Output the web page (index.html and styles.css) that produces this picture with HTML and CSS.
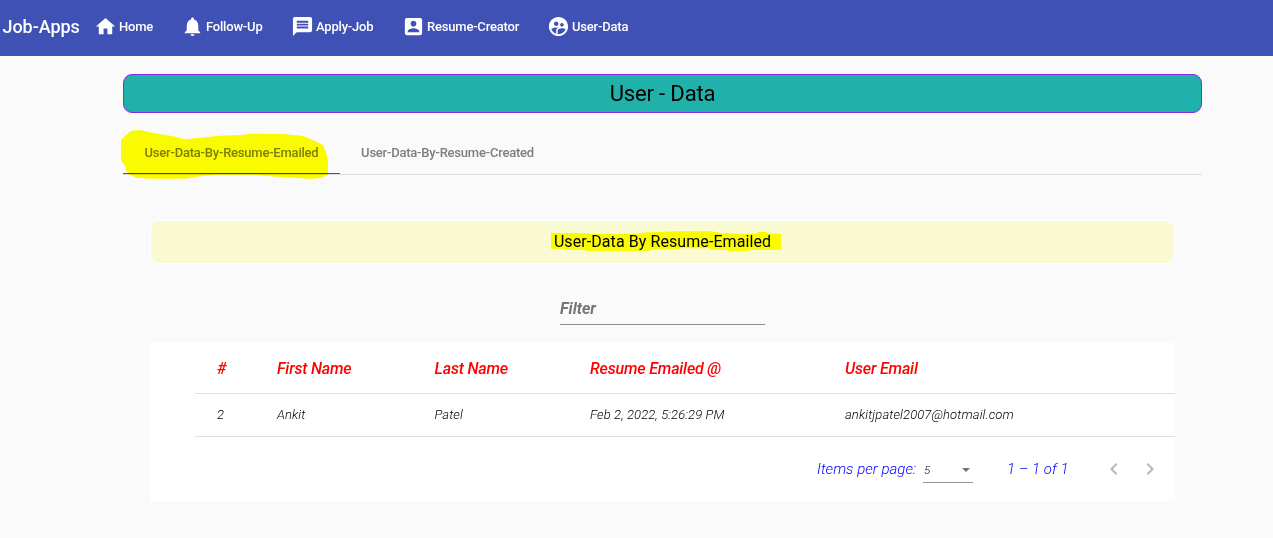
FILE: index.html
```html
<!DOCTYPE html>
<html lang="en">
<head>
<meta charset="utf-8">
<title>Job-Apps</title>
<link rel="stylesheet" href="styles.css">
</head>
<body>
<header class="toolbar">
  <span class="brand">Job-Apps</span>
  <nav class="nav">
    <a class="nav-link home"><svg viewBox="0 0 24 24"><path d="M10 20v-6h4v6h5v-8h3L12 3 2 12h3v8z"/></svg><span>Home</span></a>
    <a class="nav-link follow"><svg viewBox="0 0 24 24"><path d="M12 22c1.1 0 2-.9 2-2h-4c0 1.1.89 2 2 2zm6-6v-5c0-3.07-1.64-5.64-4.5-6.32V4c0-.83-.67-1.5-1.5-1.5s-1.5.67-1.5 1.5v.68C7.63 5.36 6 7.92 6 11v5l-2 2v1h16v-1l-2-2z"/></svg><span>Follow-Up</span></a>
    <a class="nav-link apply"><svg viewBox="0 0 24 24"><path d="M20 2H4c-1.1 0-1.99.9-1.99 2L2 22l4-4h14c1.1 0 2-.9 2-2V4c0-1.1-.9-2-2-2zm-2 12H6v-2h12v2zm0-3H6V9h12v2zm0-3H6V6h12v2z"/></svg><span>Apply-Job</span></a>
    <a class="nav-link resume"><svg viewBox="0 0 24 24"><path d="M3 5v14c0 1.1.89 2 2 2h14c1.1 0 2-.9 2-2V5c0-1.1-.9-2-2-2H5c-1.11 0-2 .9-2 2zm12 4c0 1.66-1.34 3-3 3s-3-1.34-3-3 1.34-3 3-3 3 1.34 3 3zm-9 8c0-2 4-3.1 6-3.1s6 1.1 6 3.1v1H6v-1z"/></svg><span>Resume-Creator</span></a>
    <a class="nav-link user"><svg viewBox="0 0 24 24"><path d="M11.99 2c-5.52 0-10 4.48-10 10s4.48 10 10 10 10-4.48 10-10-4.48-10-10-10zm3.61 6.34c1.07 0 1.93.86 1.93 1.93 0 1.07-.86 1.93-1.93 1.93-1.07 0-1.93-.86-1.93-1.93-.01-1.07.86-1.93 1.93-1.93zm-6-1.58c1.3 0 2.36 1.06 2.36 2.36 0 1.3-1.06 2.36-2.36 2.36s-2.36-1.06-2.36-2.36c0-1.31 1.05-2.36 2.36-2.36zm0 9.13v3.75c-2.4-.75-4.3-2.6-5.14-4.96 1.05-1.12 3.67-1.69 5.14-1.69.53 0 1.2.08 1.9.22-1.64.87-1.9 2.02-1.9 2.68zM11.99 20c-.27 0-.53-.01-.79-.04v-4.07c0-1.42 2.94-2.13 4.4-2.13 1.07 0 2.92.39 3.84 1.15-1.17 2.97-4.06 5.09-7.45 5.09z"/></svg><span>User-Data</span></a>
  </nav>
</header>
<main class="page">
  <h1 class="title"><span>User - Data</span></h1>
  <div class="tabs">
    <div class="tab active"><span>User-Data-By-Resume-Emailed</span>
      <svg class="marker marker-tab" viewBox="0 0 720 375"><path d="M33 225L50 208L65 197L90 195L130 204L190 214L225 223L270 218L330 212L390 210L425 206L520 207L580 213L610 226L640 241L648 262L654 285V330L630 339L600 342L560 339L480 334L430 329H320L270 334L228 341H120L80 338L60 330L48 318L46 305L33 285Z"/></svg>
    </div>
    <div class="tab second"><span>User-Data-By-Resume-Created</span></div>
  </div>
  <section class="content">
    <h2 class="banner"><span class="banner-text">User-Data By Resume-Emailed
      <svg class="marker marker-banner" viewBox="0 0 810 390"><path d="M63 69H178V72H310L350 67L385 66L440 64H545L568 68L620 71H680L685 66H710L712 70L753 72V120H665L648 123H595L590 120L540 119V115H450L445 118H365L360 122L315 123H168L165 120H110L105 117H63Z"/></svg></span></h2>
    <div class="filter"><span>Filter</span></div>
    <div class="card">
      <div class="table">
        <div class="row head"><span>#</span><span>First Name</span><span>Last Name</span><span>Resume Emailed @</span><span>User Email</span></div>
        <div class="row"><span>2</span><span>Ankit</span><span>Patel</span><span>Feb 2, 2022, 5:26:29 PM</span><span>ankitjpatel2007@hotmail.com</span></div>
      </div>
      <div class="paginator">
        <span class="per-page">Items per page:</span>
        <span class="select"><span>5</span><i class="caret"></i></span>
        <span class="range">1 – 1 of 1</span>
        <svg class="chevron prev" viewBox="0 0 24 24"><path d="M15.41 7.41L14 6l-6 6 6 6 1.41-1.41L10.83 12z"/></svg>
        <svg class="chevron" viewBox="0 0 24 24"><path d="M10 6L8.59 7.41 13.17 12l-4.58 4.59L10 18l6-6z"/></svg>
      </div>
    </div>
  </section>
</main>
</body>
</html>
```
FILE: styles.css
```css
* { box-sizing: border-box; }
body { margin: 0; height: 538px; overflow: hidden; background: #fafafa; font-family: Roboto, sans-serif; color: rgba(0,0,0,.87); white-space: nowrap; }
.toolbar { display: flex; align-items: center; height: 56px; padding: 0 0 3px 2.5px; background: #3f51b5; color: #fff; }
.brand { width: 91.5px; font-size: 18px; font-weight: 500; letter-spacing: -.05px; }
.nav { display: flex; }
.nav-link { display: flex; align-items: center; gap: 2px; font-size: 13px; font-weight: 500; letter-spacing: -.2px; }
.nav-link svg { width: 23px; height: 23px; fill: currentColor; }
.home { width: 87px; }
.follow { width: 110px; }
.apply { width: 111px; }
.resume { width: 145px; }
.page { width: 1079px; margin: 18px 0 0 123px; }
.title { display: flex; align-items: center; justify-content: center; height: 39px; margin: 0; border: 1px solid #8a2be2; border-radius: 9px; background: #20b2aa; color: #000; font-size: 22px; font-weight: 400; letter-spacing: -.15px; }
.tabs { display: flex; height: 44px; margin-top: 18px; border-bottom: 1px solid #dcdcdc; }
.tab { position: relative; display: flex; align-items: center; justify-content: center; width: 217px; font-size: 13px; font-weight: 500; letter-spacing: -.22px; color: #7e7e7e; }
.second { width: 215px; }
.active { border-bottom: 1px solid #3f51b5; }
.marker { position: absolute; fill: #ff0; mix-blend-mode: multiply; pointer-events: none; }
.marker-tab { left: -13px; top: -66px; width: 240px; height: 125px; }
.content { width: 1025px; margin: 45px 0 0 27px; }
.banner { display: flex; align-items: center; justify-content: center; height: 44px; margin: 0; padding-bottom: 1px; border: 1px solid #fff; border-radius: 9px; background: #fafad2; color: #000; font-size: 16px; font-weight: 400; letter-spacing: .08px; }
.banner-text { position: relative; }
.marker-banner { left: -24px; top: -22px; width: 270px; height: 130px; }
.filter { width: 205px; height: 31px; margin: 30px auto 0; padding-top: 5px; border-bottom: 1px solid #8f8f8f; color: #757575; font-size: 16px; line-height: 20px; font-weight: 700; font-style: italic; }
.card { height: 158px; margin-top: 18px; background: #fff; }
.table { margin-left: 45px; }
.row { display: grid; grid-template-columns: 60px 157.5px 155.5px 255px 1fr; align-items: center; height: 43px; padding: 0 0 2px 22px; border-bottom: 1px solid #dfdfdf; font-size: 13px; font-style: italic; font-weight: 300; letter-spacing: .11px; color: #000; }
.head { height: 51px; padding-bottom: 0; color: #f00; font-size: 16px; font-weight: 500; letter-spacing: -.18px; }
.paginator { display: flex; align-items: center; height: 64px; color: #00f; font-size: 15px; font-style: italic; font-weight: 300; letter-spacing: .03px; padding-left: 667px; }
.per-page { width: 106px; }
.select { display: flex; align-items: center; justify-content: space-between; width: 50px; height: 25px; margin-top: 3px; padding: 0 3px 0 1px; border-bottom: 1px solid #949494; color: #000; font-size: 11.5px; }
.caret { border: 4.5px solid transparent; border-top-color: #757575; border-bottom: 0; }
.range { width: 94.5px; margin-left: 34px; }
.chevron { width: 24px; height: 24px; fill: #b8b8b8; }
.prev { margin-right: 12px; }
```
